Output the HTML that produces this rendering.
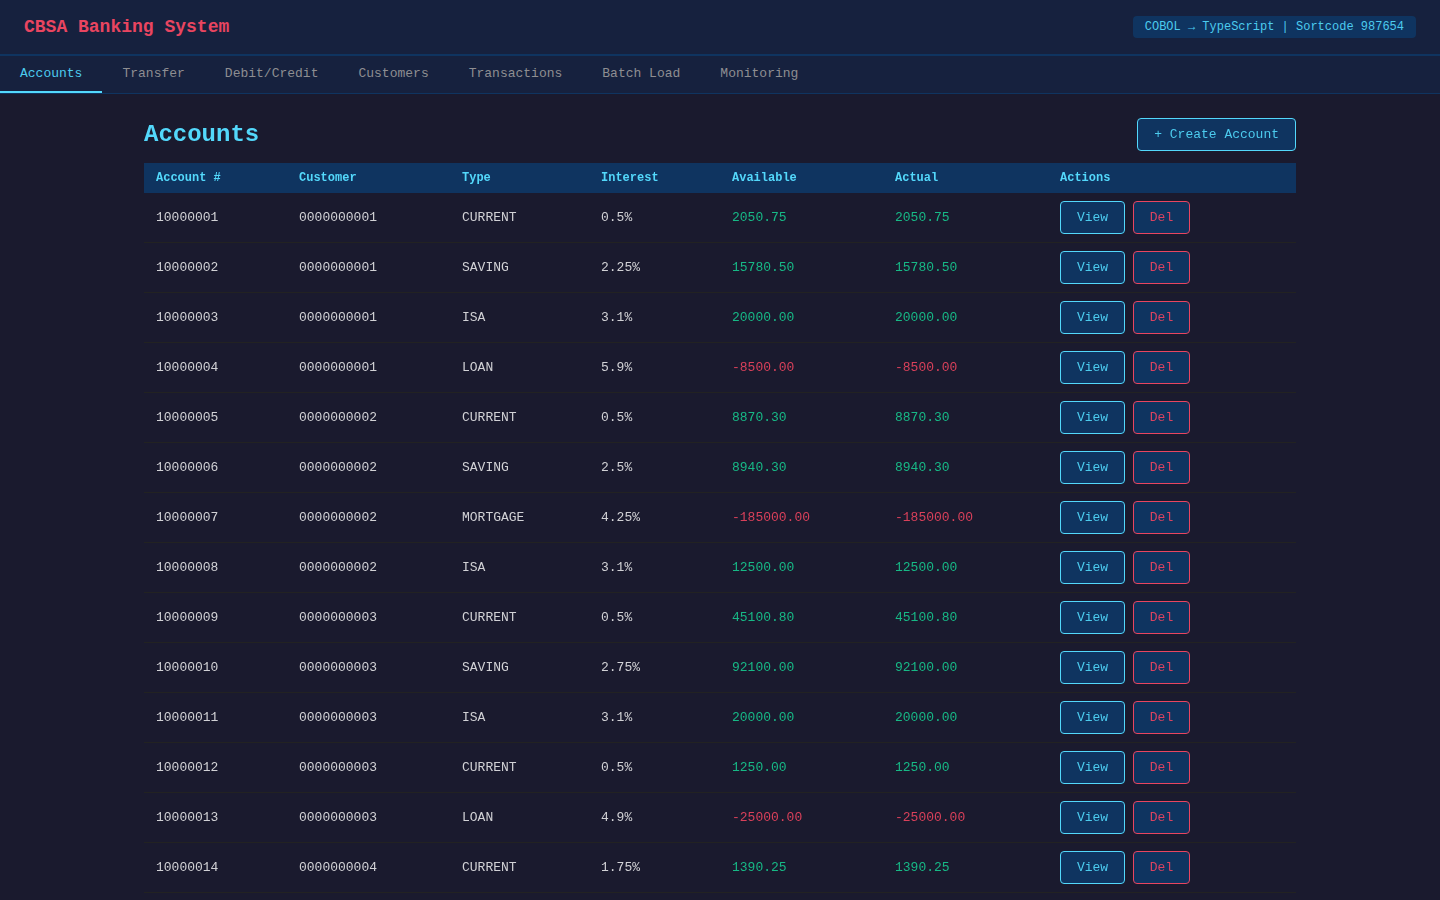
<!DOCTYPE html>
<html lang="en">
<head>
<meta charset="utf-8">
<title>CBSA Banking System</title>
<style>
*{box-sizing:border-box;margin:0;padding:0}
html,body{width:1440px;height:900px;overflow:hidden}
body{background:#1a1a2e;color:#d2d2d6;font-family:"Liberation Mono","DejaVu Sans Mono",monospace;font-size:13px;line-height:15px}
button{font-family:inherit}
.hdr{height:56px;background:#16213e;border-bottom:2px solid #0f3460;display:flex;align-items:center;justify-content:space-between;padding:0 24px}
.hdr h1{font-size:18px;line-height:20px;font-weight:bold;color:#e94560;position:relative;top:0px}
.badge{display:block;height:22px;line-height:22px;padding:0 12px;background:#0f3460;border-radius:4px;color:#4ccbee;font-size:12px;white-space:pre}
.tabs{height:38px;background:#16213e;border-bottom:1px solid #0f3460;display:flex}
.tab{height:37px;padding:10px 20px 10px;background:none;border:0;border-bottom:2px solid transparent;color:#8e8e92;font-size:13px;line-height:15px;white-space:pre}
.tab.active{color:#4ccbee;border-bottom-color:#53d8fb}
.wrap{width:1152px;margin:0 auto;padding-top:24px}
.head{height:33px;display:flex;align-items:center;justify-content:space-between;margin-bottom:12px}
.head h2{font-size:24px;line-height:27px;font-weight:bold;color:#53d8fb}
.btn{display:inline-block;height:33px;padding:0 16px;border:1px solid #53d8fb;border-radius:4px;background:#0f3460;color:#4ccbee;font-size:13px;line-height:31px;white-space:pre;vertical-align:middle}
.btn.view{width:65px;padding:0;text-align:center}
.btn.del{width:57px;padding:0;text-align:center;border-color:#e94560;color:#db4260;margin-left:8px}
table{width:1152px;border-collapse:separate;border-spacing:0;table-layout:fixed}
th{height:30px;padding:0 12px;background:#0f3460;color:#53d8fb;font-size:12px;line-height:14px;font-weight:bold;text-align:left;vertical-align:middle}
td{height:50px;padding:0 12px;border-bottom:1px solid #222;font-size:13px;line-height:15px;vertical-align:middle;white-space:pre}
td.pos{color:#17b986}
td.neg{color:#d9405a}
td.act{font-size:0}
.hdr,.tabs,.wrap{will-change:opacity}
</style>
</head>
<body>
<header class="hdr"><h1>CBSA Banking System</h1><span class="badge">COBOL → TypeScript | Sortcode 987654</span></header>
<nav class="tabs"><button class="tab active">Accounts</button><button class="tab">Transfer</button><button class="tab">Debit/Credit</button><button class="tab">Customers</button><button class="tab">Transactions</button><button class="tab">Batch Load</button><button class="tab">Monitoring</button></nav>
<main class="wrap">
<div class="head"><h2>Accounts</h2><button class="btn">+ Create Account</button></div>
<table>
<colgroup><col style="width:143px"><col style="width:163px"><col style="width:139px"><col style="width:131px"><col style="width:163px"><col style="width:165px"><col style="width:248px"></colgroup>
<thead><tr><th>Account #</th><th>Customer</th><th>Type</th><th>Interest</th><th>Available</th><th>Actual</th><th>Actions</th></tr></thead>
<tbody>
<tr><td>10000001</td><td>0000000001</td><td>CURRENT</td><td>0.5%</td><td class="pos">2050.75</td><td class="pos">2050.75</td><td class="act"><button class="btn view">View</button><button class="btn del">Del</button></td></tr>
<tr><td>10000002</td><td>0000000001</td><td>SAVING</td><td>2.25%</td><td class="pos">15780.50</td><td class="pos">15780.50</td><td class="act"><button class="btn view">View</button><button class="btn del">Del</button></td></tr>
<tr><td>10000003</td><td>0000000001</td><td>ISA</td><td>3.1%</td><td class="pos">20000.00</td><td class="pos">20000.00</td><td class="act"><button class="btn view">View</button><button class="btn del">Del</button></td></tr>
<tr><td>10000004</td><td>0000000001</td><td>LOAN</td><td>5.9%</td><td class="neg">-8500.00</td><td class="neg">-8500.00</td><td class="act"><button class="btn view">View</button><button class="btn del">Del</button></td></tr>
<tr><td>10000005</td><td>0000000002</td><td>CURRENT</td><td>0.5%</td><td class="pos">8870.30</td><td class="pos">8870.30</td><td class="act"><button class="btn view">View</button><button class="btn del">Del</button></td></tr>
<tr><td>10000006</td><td>0000000002</td><td>SAVING</td><td>2.5%</td><td class="pos">8940.30</td><td class="pos">8940.30</td><td class="act"><button class="btn view">View</button><button class="btn del">Del</button></td></tr>
<tr><td>10000007</td><td>0000000002</td><td>MORTGAGE</td><td>4.25%</td><td class="neg">-185000.00</td><td class="neg">-185000.00</td><td class="act"><button class="btn view">View</button><button class="btn del">Del</button></td></tr>
<tr><td>10000008</td><td>0000000002</td><td>ISA</td><td>3.1%</td><td class="pos">12500.00</td><td class="pos">12500.00</td><td class="act"><button class="btn view">View</button><button class="btn del">Del</button></td></tr>
<tr><td>10000009</td><td>0000000003</td><td>CURRENT</td><td>0.5%</td><td class="pos">45100.80</td><td class="pos">45100.80</td><td class="act"><button class="btn view">View</button><button class="btn del">Del</button></td></tr>
<tr><td>10000010</td><td>0000000003</td><td>SAVING</td><td>2.75%</td><td class="pos">92100.00</td><td class="pos">92100.00</td><td class="act"><button class="btn view">View</button><button class="btn del">Del</button></td></tr>
<tr><td>10000011</td><td>0000000003</td><td>ISA</td><td>3.1%</td><td class="pos">20000.00</td><td class="pos">20000.00</td><td class="act"><button class="btn view">View</button><button class="btn del">Del</button></td></tr>
<tr><td>10000012</td><td>0000000003</td><td>CURRENT</td><td>0.5%</td><td class="pos">1250.00</td><td class="pos">1250.00</td><td class="act"><button class="btn view">View</button><button class="btn del">Del</button></td></tr>
<tr><td>10000013</td><td>0000000003</td><td>LOAN</td><td>4.9%</td><td class="neg">-25000.00</td><td class="neg">-25000.00</td><td class="act"><button class="btn view">View</button><button class="btn del">Del</button></td></tr>
<tr><td>10000014</td><td>0000000004</td><td>CURRENT</td><td>1.75%</td><td class="pos">1390.25</td><td class="pos">1390.25</td><td class="act"><button class="btn view">View</button><button class="btn del">Del</button></td></tr>
<tr><td>10000015</td><td>0000000004</td><td>SAVING</td><td>3.0%</td><td class="pos">64200.00</td><td class="pos">64200.00</td><td class="act"><button class="btn view">View</button><button class="btn del">Del</button></td></tr>
</tbody>
</table>
</main>
</body>
</html>
